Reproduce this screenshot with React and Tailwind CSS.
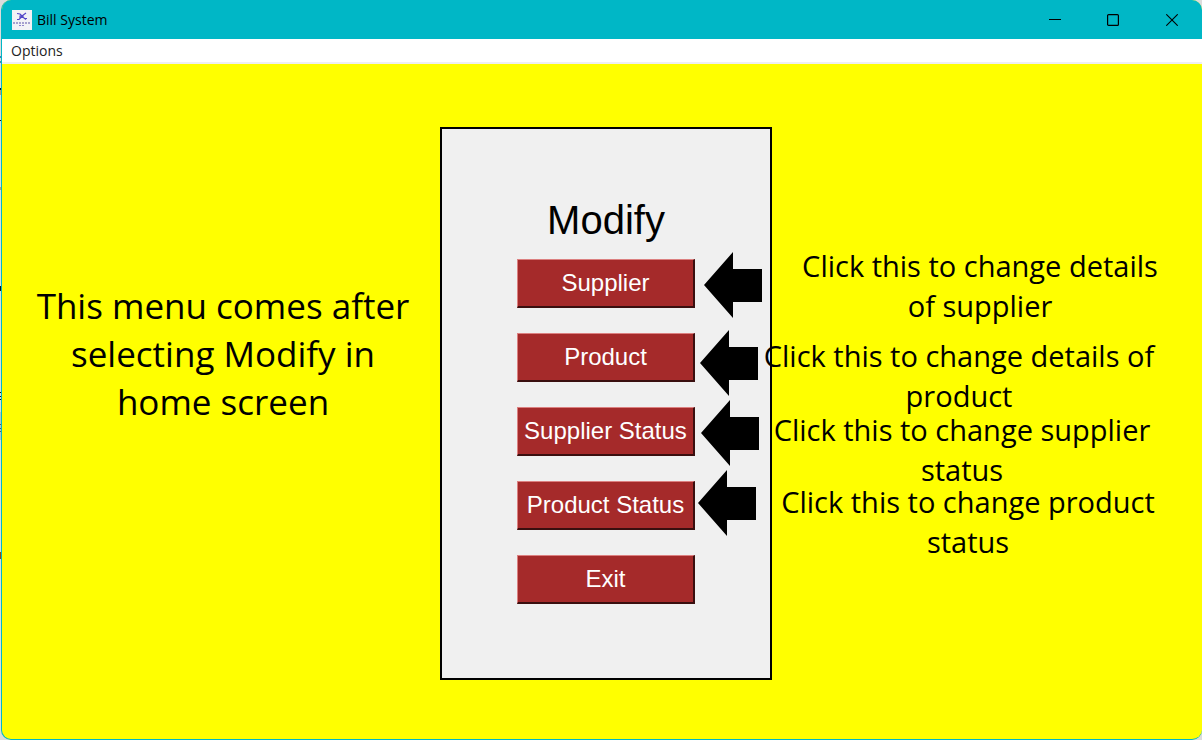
const items = ["Supplier", "Product", "Supplier Status", "Product Status", "Exit"];

function Arrow({ className }) {
  return (
    <svg className={`absolute h-[66px] w-[58px] ${className}`} viewBox="0 0 58 66" aria-hidden="true">
      <path d="M0 33 29 0V17H58V50H29V66Z" fill="#000" />
    </svg>
  );
}

function Callout({ className, children }) {
  return (
    <p className={`absolute w-[400px] text-center text-[29px] leading-10 whitespace-nowrap ${className}`}>
      {children}
    </p>
  );
}

export default function App() {
  return (
    <div className="flex min-h-screen bg-[#dcdcdc] font-['Open_Sans',sans-serif] text-black">
      <svg className="w-px shrink-0" viewBox="0 0 1 740" width="1" height="740" aria-hidden="true">
        <path d="M0 56h1v2h-1zM0 61h1v2h-1z" fill="#3a86b8" />
        <path d="M0 88h1v2h-1zM0 120h1v1h-1zM0 286h1v5h-1zM0 392h1v1h-1zM0 396h1v1h-1zM0 399h1v1h-1zM0 424h1v1h-1zM0 428h1v1h-1zM0 431h1v1h-1z" fill="#111" />
        <path d="M0 412h1v28h-1z" fill="#8ea3ad" opacity=".5" />
        <path d="M0 90h1v5h-1zM0 187h1v3h-1z" fill="#c59a6c" />
        <path d="M0 552h1v7h-1z" fill="#9c4a12" />
      </svg>
      <div className="flex min-w-0 flex-1 flex-col overflow-hidden rounded-[10px] border-b border-l border-[#00b7c6] bg-[#ffff00]">
        <header className="flex h-[39px] shrink-0 items-center bg-[#00b7c6] pl-[10px]">
          <svg className="size-5" viewBox="0 0 20 20" aria-hidden="true">
            <path fill="#f2f2f6" d="M0 0h20v20H0z" />
            <path d="m5 3.5 3 .5 2 2 4-3M5 9.5h2l3-3 4 3M8 6h3v1.500H8zM13 8.500h2" fill="none" stroke="#5548c8" strokeWidth="1.2" />
            <path d="M1 13h17" stroke="#5a50a8" strokeDasharray="2 1" />
            <path d="M7 15.500h6" stroke="#8d85cc" strokeDasharray="2 1" />
          </svg>
          <h1 className="ml-[5px] flex-1 text-sm">Bill System</h1>
          <div className="flex h-full">
            <button aria-label="Minimize" className="grid w-[58px] place-items-center">
              <svg width="12" height="12" viewBox="0 0 12 12"><path d="M0 5.5h12" stroke="#000" /></svg>
            </button>
            <button aria-label="Maximize" className="grid w-[58px] place-items-center">
              <svg width="12" height="12" viewBox="0 0 12 12"><rect x=".6" y=".6" width="10.8" height="10.8" rx="1" fill="none" stroke="#000" strokeWidth="1.2" /></svg>
            </button>
            <button aria-label="Close" className="grid w-[60px] place-items-center">
              <svg width="12" height="12" viewBox="0 0 12 12"><path d="m.3.3 11.4 11.4M11.7.3.3 11.7" stroke="#000" strokeWidth="1.1" /></svg>
            </button>
          </div>
        </header>
        <nav className="flex h-[25px] shrink-0 items-center border-b-2 border-[#f0f0f0] bg-white pl-[9px]">
          <button className="text-sm text-[#222]">Options</button>
        </nav>
        <main className="grid flex-1 grid-cols-[438fr_332px_430fr] items-center pt-1">
          <p className="pb-[100px] pl-1 text-center text-[35px] leading-[48px] whitespace-nowrap">
            This menu comes after
            <br />
            selecting Modify in
            <br />
            home screen
          </p>
          <section className="relative flex h-[553px] flex-col items-center border-2 border-black bg-[#f0f0f0] pt-16 font-['Liberation_Sans',sans-serif]">
            <h2 className="text-[40px] leading-[54px]">Modify</h2>
            <div className="mt-3 flex w-[178px] flex-col gap-[25px]">
              {items.map((item) => (
                <button
                  key={item}
                  className="h-[49px] border-t border-r-2 border-b-2 border-l border-t-[#dc8080] border-r-[#3a0f0f] border-b-[#3a0f0f] border-l-[#dc8080] bg-[#a52a2a] text-2xl whitespace-nowrap text-white"
                >
                  {item}
                </button>
              ))}
            </div>
            <Arrow className="top-[123px] left-[262px]" />
            <Arrow className="top-[201px] left-[258px]" />
            <Arrow className="top-[271px] left-[259px]" />
            <Arrow className="top-[341px] left-[256px]" />
            <div className="font-['Open_Sans',sans-serif]">
              <Callout className="top-[117px] left-[338px]">
                Click this to change details
                <br />
                of supplier
              </Callout>
              <Callout className="top-[207px] left-[317px]">
                Click this to change details of
                <br />
                product
              </Callout>
              <Callout className="top-[281px] left-[320px]">
                Click this to change supplier
                <br />
                status
              </Callout>
              <Callout className="top-[353px] left-[326px]">
                Click this to change product
                <br />
                status
              </Callout>
            </div>
          </section>
        </main>
      </div>
    </div>
  );
}
